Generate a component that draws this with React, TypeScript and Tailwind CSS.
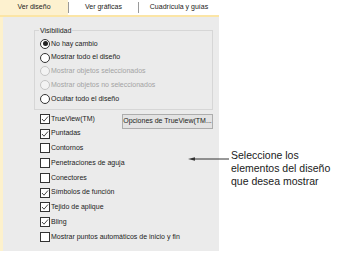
import React from "react";

const radios = [
  { label: "No hay cambio", checked: true, disabled: false },
  { label: "Mostrar todo el diseño", checked: false, disabled: false },
  { label: "Mostrar objetos seleccionados", checked: false, disabled: true },
  { label: "Mostrar objetos no seleccionados", checked: false, disabled: true },
  { label: "Ocultar todo el diseño", checked: false, disabled: false },
];

const checks = [
  { label: "Puntadas", checked: true },
  { label: "Contornos", checked: false },
  { label: "Penetraciones de aguja", checked: false },
  { label: "Conectores", checked: false },
  { label: "Símbolos de función", checked: true },
  { label: "Tejido de aplique", checked: true },
  { label: "Bling", checked: true },
  { label: "Mostrar puntos automáticos de inicio y fin", checked: false },
];

function Radio({ checked, disabled }: { checked: boolean; disabled: boolean }) {
  return (
    <span
      className={`w-[10px] h-[10px] rounded-full border flex items-center justify-center shrink-0 ${
        disabled ? "border-[#c4c4c4] bg-[#f3f3f3]" : "border-[#333333] bg-white"
      }`}
    >
      {checked && <span className="w-[5px] h-[5px] rounded-full bg-[#222222]" />}
    </span>
  );
}

function Check({ checked }: { checked: boolean }) {
  return (
    <span className="w-[10px] h-[10px] border border-[#333333] bg-white flex items-center justify-center shrink-0">
      {checked && (
        <svg width="8" height="8" viewBox="0 0 8 8">
          <polyline points="1,4 3,6.2 7,1.5" fill="none" stroke="#333333" strokeWidth="0.9" />
        </svg>
      )}
    </span>
  );
}

function CheckRow({ label, checked }: { label: string; checked: boolean }) {
  return (
    <div className="h-[14.75px] flex items-center gap-[1px]">
      <Check checked={checked} />
      <span>{label}</span>
    </div>
  );
}

export default function App() {
  return (
    <div className="w-[351px] h-[268px] bg-white flex items-start relative font-['Liberation_Sans',Arial,sans-serif] text-[#222222]">
      {/* dialog panel */}
      <div className="w-[219px] h-[251px] flex flex-col text-[7px]">
        {/* tabs */}
        <div className="h-[17px] flex border-b-2 border-[#fbe5a6] shrink-0">
          <div className="w-[68px] bg-[#fdf1cf] flex items-center justify-center">Ver diseño</div>
          <div className="w-px my-[2px] bg-[#9a9a9a]" />
          <div className="w-[69px] bg-white flex items-center justify-center">Ver gráficas</div>
          <div className="w-px my-[2px] bg-[#9a9a9a]" />
          <div className="flex-1 bg-white flex items-center justify-center">Cuadrícula y guías</div>
        </div>

        {/* body */}
        <div className="flex-1 flex">
          <div className="w-[3px] bg-[#fdf1cc]" />
          <div className="flex-1 bg-[#ebebeb] pl-[31px] pr-[6px] pt-[8.5px]">
            <fieldset className="border border-[#d6d6d6]">
              <legend className="ml-[4px] px-[1px] leading-[9px]">Visibilidad</legend>
              <div className="pt-[2.6px] pb-[3px] pl-[5px]">
                {radios.map((r) => (
                  <div key={r.label} className="h-[13.75px] flex items-center gap-[1px]">
                    <Radio checked={r.checked} disabled={r.disabled} />
                    <span className={r.disabled ? "text-[#a3a3a3]" : ""}>{r.label}</span>
                  </div>
                ))}
              </div>
            </fieldset>

            <div className="mt-[1.75px] pl-[6px]">
              <div className="flex items-start justify-between">
                <CheckRow label="TrueView(TM)" checked={true} />
                <button className="w-[91px] h-[15px] mt-[2.5px] -mb-[2.75px] border border-[#adadad] bg-[#e3e3e3] flex items-center justify-center whitespace-nowrap">
                  Opciones de TrueView(TM...
                </button>
              </div>
              {checks.map((c) => (
                <CheckRow key={c.label} label={c.label} checked={c.checked} />
              ))}
            </div>
          </div>
        </div>
      </div>

      {/* callout */}
      <div className="ml-[12px] mt-[148.5px] text-[10.5px] leading-[13px] text-[#1a1a1a]">
        Seleccione los
        <br />
        elementos del diseño
        <br />
        que desea mostrar
      </div>
      <svg className="absolute left-[187px] top-[155px]" width="44" height="8" viewBox="0 0 44 8">
        <polygon points="1,4 8,2.2 8,5.8" fill="#333333" />
        <line x1="7" y1="4" x2="42" y2="4" stroke="#333333" strokeWidth="1" />
      </svg>
    </div>
  );
}
